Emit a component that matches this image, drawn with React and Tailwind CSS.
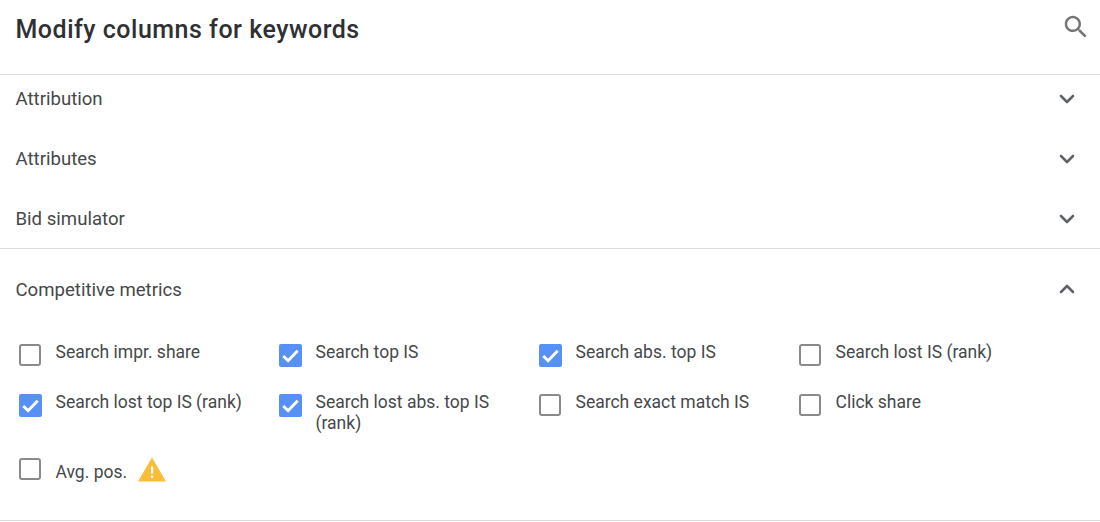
import React from "react";
import { ChevronDown, ChevronUp } from "lucide-react";

const metrics = [
  { label: "Search impr. share", checked: false },
  { label: "Search top IS", checked: true },
  { label: "Search abs. top IS", checked: true },
  { label: "Search lost IS (rank)", checked: false },
  { label: "Search lost top IS (rank)", checked: true },
  { label: "Search lost abs. top IS (rank)", checked: true },
  { label: "Search exact match IS", checked: false },
  { label: "Click share", checked: false },
];

function Checkbox({ checked }) {
  if (checked) {
    return (
      <span className="flex h-[23px] w-[23px] shrink-0 items-center justify-center rounded-[2px] bg-[#5891f5]">
        <svg viewBox="0 0 24 24" className="h-[23px] w-[23px]" fill="none" stroke="#fff" strokeWidth="3">
          <path d="M4.5 12.5l5 5L19.5 7" />
        </svg>
      </span>
    );
  }
  return <span className="block h-[22px] w-[22px] shrink-0 rounded-[3px] border-[2.5px] border-[#8a8a8a]" />;
}

function Metric({ label, checked }) {
  return (
    <div className="flex h-[50px] w-[260px] items-start">
      <div className="mt-[3px] flex w-[36.5px] shrink-0">
        <Checkbox checked={checked} />
      </div>
      <span className="mt-[1px] w-[190px] text-[17.5px] leading-[21px] text-[#45484b]">{label}</span>
    </div>
  );
}

function CollapsedRow({ title }) {
  return (
    <div className="flex h-12 items-center justify-between pl-[15.5px] pr-[21px]">
      <span className="mt-[2px] text-[18.6px] text-[#45484b]">{title}</span>
      <ChevronDown size={24} strokeWidth={2.6} className="-mt-[1px] text-[#5f6368]" />
    </div>
  );
}

export default function App() {
  return (
    <div className="h-[522px] w-[1100px] overflow-hidden bg-white font-['Roboto',sans-serif]">
      <header className="flex h-[75px] items-start justify-between border-b border-[#dadce0] pl-[15.5px] pr-[9px] pt-[12px]">
        <h1 className="mt-[1px] text-[25px] font-medium leading-[34px] tracking-[0.5px] text-[#2f3033]">
          Modify columns for keywords
        </h1>
        <svg viewBox="0 0 24 24" className="h-[30px] w-[30px]" fill="#757575">
          <path d="M15.5 14h-.79l-.28-.27C15.41 12.59 16 11.11 16 9.5 16 5.91 13.09 3 9.5 3S3 5.91 3 9.5 5.91 16 9.5 16c1.61 0 3.09-.59 4.23-1.57l.27.28v.79l5 4.99L20.49 19l-4.99-5zm-6 0C7.01 14 5 11.99 5 9.5S7.01 5 9.5 5 14 7.01 14 9.5 11.99 14 9.5 14z" />
        </svg>
      </header>
      <section className="flex h-[174px] flex-col gap-3 border-b border-[#dadce0]">
        <CollapsedRow title="Attribution" />
        <CollapsedRow title="Attributes" />
        <CollapsedRow title="Bid simulator" />
      </section>
      <section className="h-[272px] border-b border-[#dadce0]">
        <div className="flex h-[80px] items-center justify-between pl-[15.5px] pr-[21px]">
          <span className="mt-[4px] text-[18.6px] text-[#45484b]">Competitive metrics</span>
          <ChevronUp size={24} strokeWidth={2.6} className="text-[#5f6368]" />
        </div>
        <div className="grid grid-cols-[repeat(4,260px)] pl-[19px] pt-[12px]">
          {metrics.map((m) => (
            <Metric key={m.label} label={m.label} checked={m.checked} />
          ))}
        </div>
        <div className="mt-[17px] flex items-start pl-[19px]">
          <div className="flex w-[36.5px]">
            <Checkbox checked={false} />
          </div>
          <span className="mt-[4px] text-[17.5px] leading-[21px] text-[#45484b]">Avg. pos.</span>
          <svg viewBox="0 0 28 24" className="-mt-[1px] ml-[11px] h-[25px] w-[28px]">
            <path d="M14 0L28 24H0z" fill="#fbbc3a" />
            <rect x="13" y="9" width="2.2" height="7" fill="#fff" />
            <rect x="13" y="18" width="2.2" height="2.4" fill="#fff" />
          </svg>
        </div>
      </section>
    </div>
  );
}
